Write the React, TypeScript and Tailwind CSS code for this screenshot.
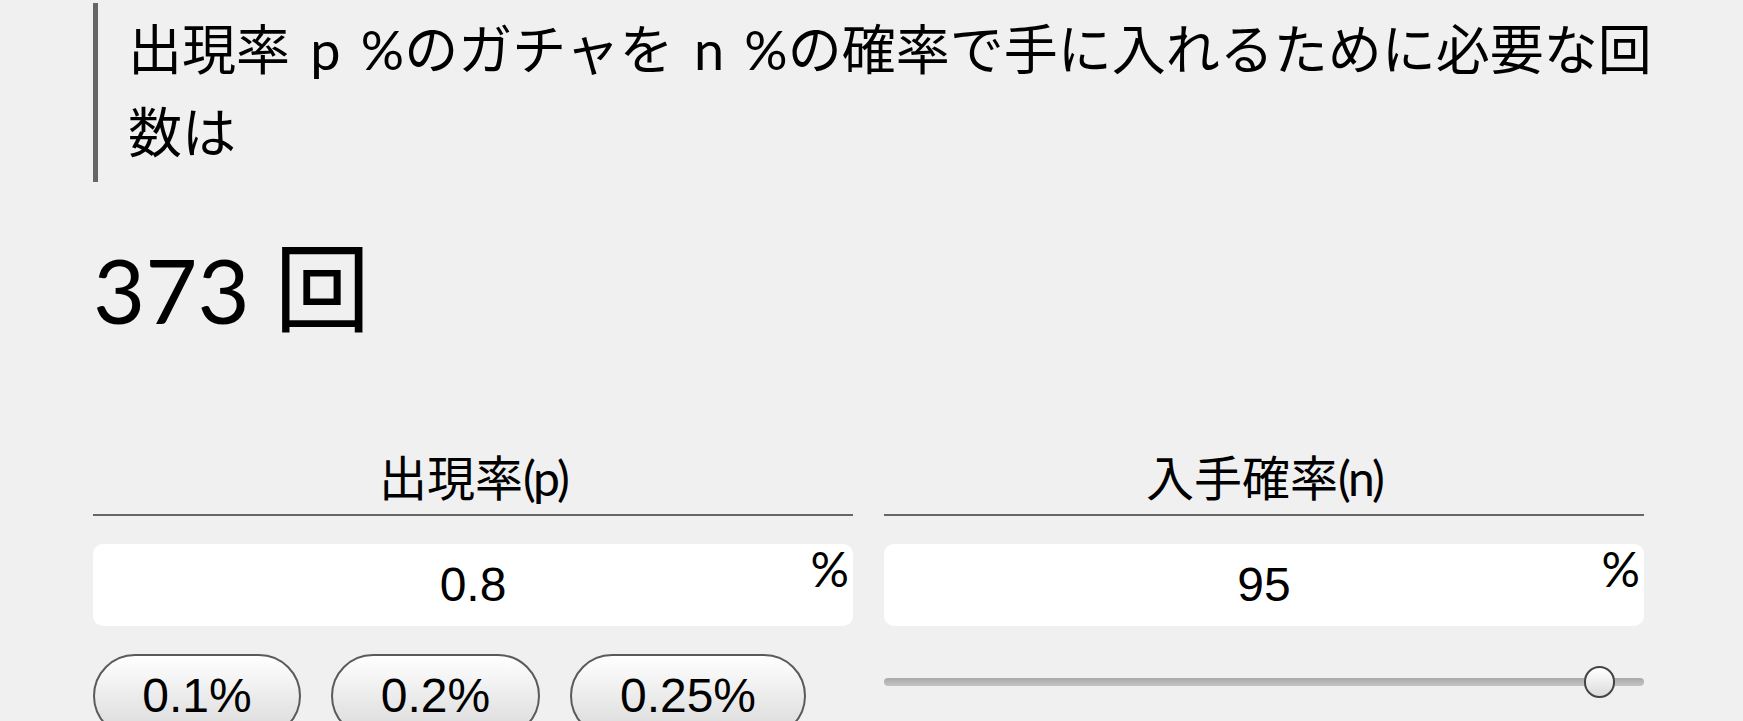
import React from "react";

const cjk = "font-['Lato','Noto_Sans_CJK_JP',sans-serif]";

function PercentInput({ value }: { value: string }) {
  return (
    <div className="relative mt-[28px] flex h-[82px] items-center justify-center rounded-[10px] bg-white">
      <span className="font-['Liberation_Sans','Noto_Sans_CJK_JP',sans-serif] text-[48px] leading-none text-black">
        {value}
      </span>
      <span className="absolute right-[4px] top-[1px] font-['Lato',sans-serif] text-[48px] leading-none text-black">
        %
      </span>
    </div>
  );
}

function Label({ children }: { children: React.ReactNode }) {
  return (
    <div
      className={`${cjk} border-b-2 border-[#666] pb-[8px] text-center text-[48px] leading-[56px] text-black`}
    >
      {children}
    </div>
  );
}

function PresetButton({ label, width }: { label: string; width: string }) {
  return (
    <button
      className={`${width} flex h-[84px] items-center justify-center rounded-full border-2 border-[#5a5a5a] bg-gradient-to-b from-white to-[#d9d9d9] font-['Liberation_Sans',sans-serif] text-[48px] leading-none text-black`}
    >
      {label}
    </button>
  );
}

export default function App() {
  const n = 95;
  const min = 0;
  const max = 99;
  const ratio = (n - min) / (max - min);

  return (
    <div className="min-h-screen overflow-hidden bg-[#f0f0f0] pl-[93px] pr-[99px] pt-[3px]">
      <blockquote
        className={`${cjk} mr-[-40px] border-l-[5px] border-[#666] pb-[8px] pl-[30px] pt-[5px] text-[54px] leading-[83px] text-black [word-spacing:0.12em]`}
      >
        出現率 p %のガチャを n %の確率で手に入れるために必要な回数は
      </blockquote>

      <div className={`${cjk} mt-[57px] h-[96px] text-[96px] leading-none text-black`}>
        <span className="text-[90px]">373</span> 回
      </div>

      <div className="mt-[115px] grid grid-cols-2 gap-[31px]">
        <div>
          <Label>
            出現率<span className="tracking-[-0.06em]">(p)</span>
          </Label>
          <PercentInput value="0.8" />
          <div className="mt-[28px] flex gap-[30px]">
            <PresetButton label="0.1%" width="w-[208px]" />
            <PresetButton label="0.2%" width="w-[209px]" />
            <PresetButton label="0.25%" width="w-[236px]" />
          </div>
        </div>
        <div>
          <Label>
            入手確率<span className="tracking-[-0.06em]">(n)</span>
          </Label>
          <PercentInput value="95" />
          <div className="relative mt-[40px] flex h-[32px] items-center">
            <div className="h-[8px] w-full rounded-full bg-gradient-to-b from-[#a9a9a9] to-[#c4c4c4]" />
            <div
              className="absolute top-0 h-[32px] w-[31px] rounded-full border-2 border-[#444] bg-gradient-to-b from-white to-[#dcdcdc]"
              style={{ left: `calc(${ratio} * (100% - 31px))` }}
            />
          </div>
        </div>
      </div>
    </div>
  );
}
